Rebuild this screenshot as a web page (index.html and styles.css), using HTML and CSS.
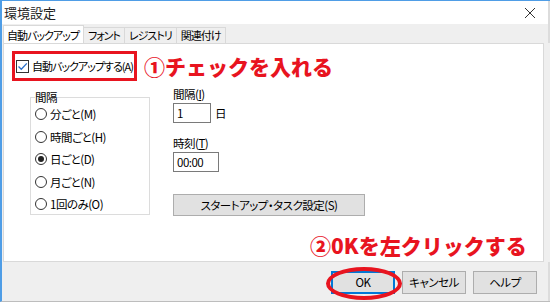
FILE: index.html
```html
<!DOCTYPE html>
<html lang="ja">
<head>
    <meta charset="UTF-8">
    <title>環境設定</title>
    <link rel="stylesheet" href="styles.css">
</head>
<body>
    <div class="window">
        <div class="titlebar">
            <span class="title">環境設定</span>
            <span class="close">
                <svg width="12" height="12" viewBox="0 0 12 12"><path d="M1 1L11 11M11 1L1 11" stroke="#333" stroke-width="1"/></svg>
            </span>
        </div>
        <div class="tabs">
            <div class="tab active">自動バックアップ</div>
            <div class="tab">フォント</div>
            <div class="tab">レジストリ</div>
            <div class="tab">関連付け</div>
        </div>
        <div class="panel">
            <div class="check-row">
                <label class="check-box">
                    <span class="checkbox">
                        <svg width="11" height="11" viewBox="0 0 11 11"><path d="M1.5 5.5L4.3 8.3L9.8 2.4" fill="none" stroke="#2a6fc9" stroke-width="1.3"/></svg>
                    </span>
                    自動バックアップする(A)
                </label>
                <span class="note note1">①チェックを入れる</span>
            </div>
            <div class="columns">
                <fieldset class="group">
                    <legend>間隔</legend>
                    <div class="radio"><span class="dot"></span>分ごと(M)</div>
                    <div class="radio"><span class="dot"></span>時間ごと(H)</div>
                    <div class="radio"><span class="dot on"></span>日ごと(D)</div>
                    <div class="radio"><span class="dot"></span>月ごと(N)</div>
                    <div class="radio"><span class="dot"></span>1回のみ(O)</div>
                </fieldset>
                <div class="side">
                    <div class="field-label">間隔(<u>I</u>)</div>
                    <div class="field-row"><span class="input short">1</span><span>日</span></div>
                    <div class="field-label gap">時刻(<u>T</u>)</div>
                    <div class="field-row"><span class="input mid">00:00</span></div>
                    <div class="wide-btn">スタートアップ・タスク設定(S)</div>
                </div>
            </div>
            <div class="note note2">②0Kを左クリックする</div>
        </div>
        <div class="footer">
            <div class="btn ok">OK<span class="ring"></span></div>
            <div class="btn">キャンセル</div>
            <div class="btn">ヘルプ</div>
        </div>
    </div>
</body>
</html>
```

FILE: styles.css
```css
body {
    margin: 0;
    padding: 0;
    font-family: "Noto Sans CJK JP", "Noto Sans", sans-serif;
    font-size: 11.5px;
    letter-spacing: -0.5px;
    font-feature-settings: "palt";
    color: #000;
    background: #fff;
    white-space: nowrap;
}
.window {
    width: 548px;
    height: 300px;
    border-top: 1px solid #4f9de6;
    border-left: 2px solid #4f9de6;
    border-bottom: 1px solid #bdbdbd;
    background: #efefef;
    display: flex;
    flex-direction: column;
    overflow: hidden;
}
.titlebar {
    height: 23px;
    background: #fff;
    display: flex;
    align-items: center;
    justify-content: space-between;
    padding: 0 12px 0 2px;
    border-right: 2px solid #dcdcdc;
}
.title {
    font-size: 13px;
    letter-spacing: 0;
    color: #222;
}
.close {
    display: flex;
}
.tabs {
    height: 19px;
    display: flex;
    align-items: flex-end;
    padding-left: 1px;
    border-right: 2px solid #dcdcdc;
}
.tab {
    height: 15px;
    line-height: 15px;
    padding: 0 4px;
    border: 1px solid #d9d9d9;
    border-bottom: none;
    border-left: none;
    background: #efefef;
    font-size: 11px;
    letter-spacing: -1px;
}
.tab.active {
    height: 18px;
    line-height: 18px;
    background: #fff;
    border-left: 1px solid #d9d9d9;
    padding: 0 4px 0 3px;
    position: relative;
    top: 1px;
}
.panel {
    background: #fff;
    margin: 0 6px 0 1px;
    border: 1px solid #d9d9d9;
    height: 210px;
    padding: 7px 0 0 8px;
    position: relative;
}
.check-row {
    display: flex;
    align-items: center;
}
.check-box {
    flex-shrink: 0;
    width: 118px;
    height: 24px;
    border: 3px solid #e8141f;
    display: flex;
    align-items: center;
    padding-left: 1px;
    font-size: 11px;
    letter-spacing: -1px;
}
.checkbox {
    flex-shrink: 0;
    width: 11px;
    height: 11px;
    border: 1px solid #333;
    margin-right: 3px;
    display: flex;
}
.note {
    color: #e8141f;
    font-weight: 900;
    font-size: 21px;
    letter-spacing: 0;
    font-feature-settings: normal;
}
.note1 {
    margin-left: 7px;
}
.columns {
    display: flex;
    margin-top: 10px;
    padding-left: 18px;
}
.group {
    width: 114px;
    height: 122px;
    margin: 0;
    padding: 0 0 0 4px;
    border: 1px solid #dcdcdc;
}
.group legend {
    padding: 0;
    line-height: 12px;
}
.radio {
    display: flex;
    align-items: center;
    height: 22.5px;
}
.dot {
    width: 10px;
    height: 10px;
    border: 1px solid #333;
    border-radius: 50%;
    margin-right: 3px;
    position: relative;
}
.dot.on::after {
    content: "";
    position: absolute;
    left: 2px;
    top: 2px;
    width: 6px;
    height: 6px;
    border-radius: 50%;
    background: #222;
}
.side {
    margin: -4px 0 0 23px;
}
.field-label {
    line-height: 14px;
}
.field-label.gap {
    margin-top: 13px;
}
.field-row {
    display: flex;
    align-items: center;
    gap: 4px;
    margin-top: 2px;
}
.input {
    height: 18px;
    line-height: 18px;
    border: 1px solid #7a7a7a;
    padding-left: 3px;
}
.input.short {
    width: 33px;
}
.input.mid {
    width: 41px;
}
.wide-btn {
    width: 190px;
    height: 20px;
    line-height: 20px;
    margin-top: 22px;
    border: 1px solid #adadad;
    background: #e1e1e1;
    text-align: center;
}
.note2 {
    position: absolute;
    left: 306px;
    top: 186px;
}
.footer {
    flex: 1;
    display: flex;
    justify-content: flex-end;
    align-items: center;
    gap: 7px;
    padding: 2px 11px 0 0;
    border-right: 2px solid #dcdcdc;
}
.btn {
    width: 62px;
    height: 21px;
    line-height: 21px;
    border: 1px solid #adadad;
    background: #e1e1e1;
    text-align: center;
    position: relative;
}
.btn.ok {
    border: 1px solid #0078d7;
    box-shadow: inset 0 0 0 1px #0078d7;
}
.ring {
    position: absolute;
    left: -6px;
    top: -5px;
    width: 68px;
    height: 25px;
    border: 4px solid #e8141f;
    border-radius: 50%;
}
```
